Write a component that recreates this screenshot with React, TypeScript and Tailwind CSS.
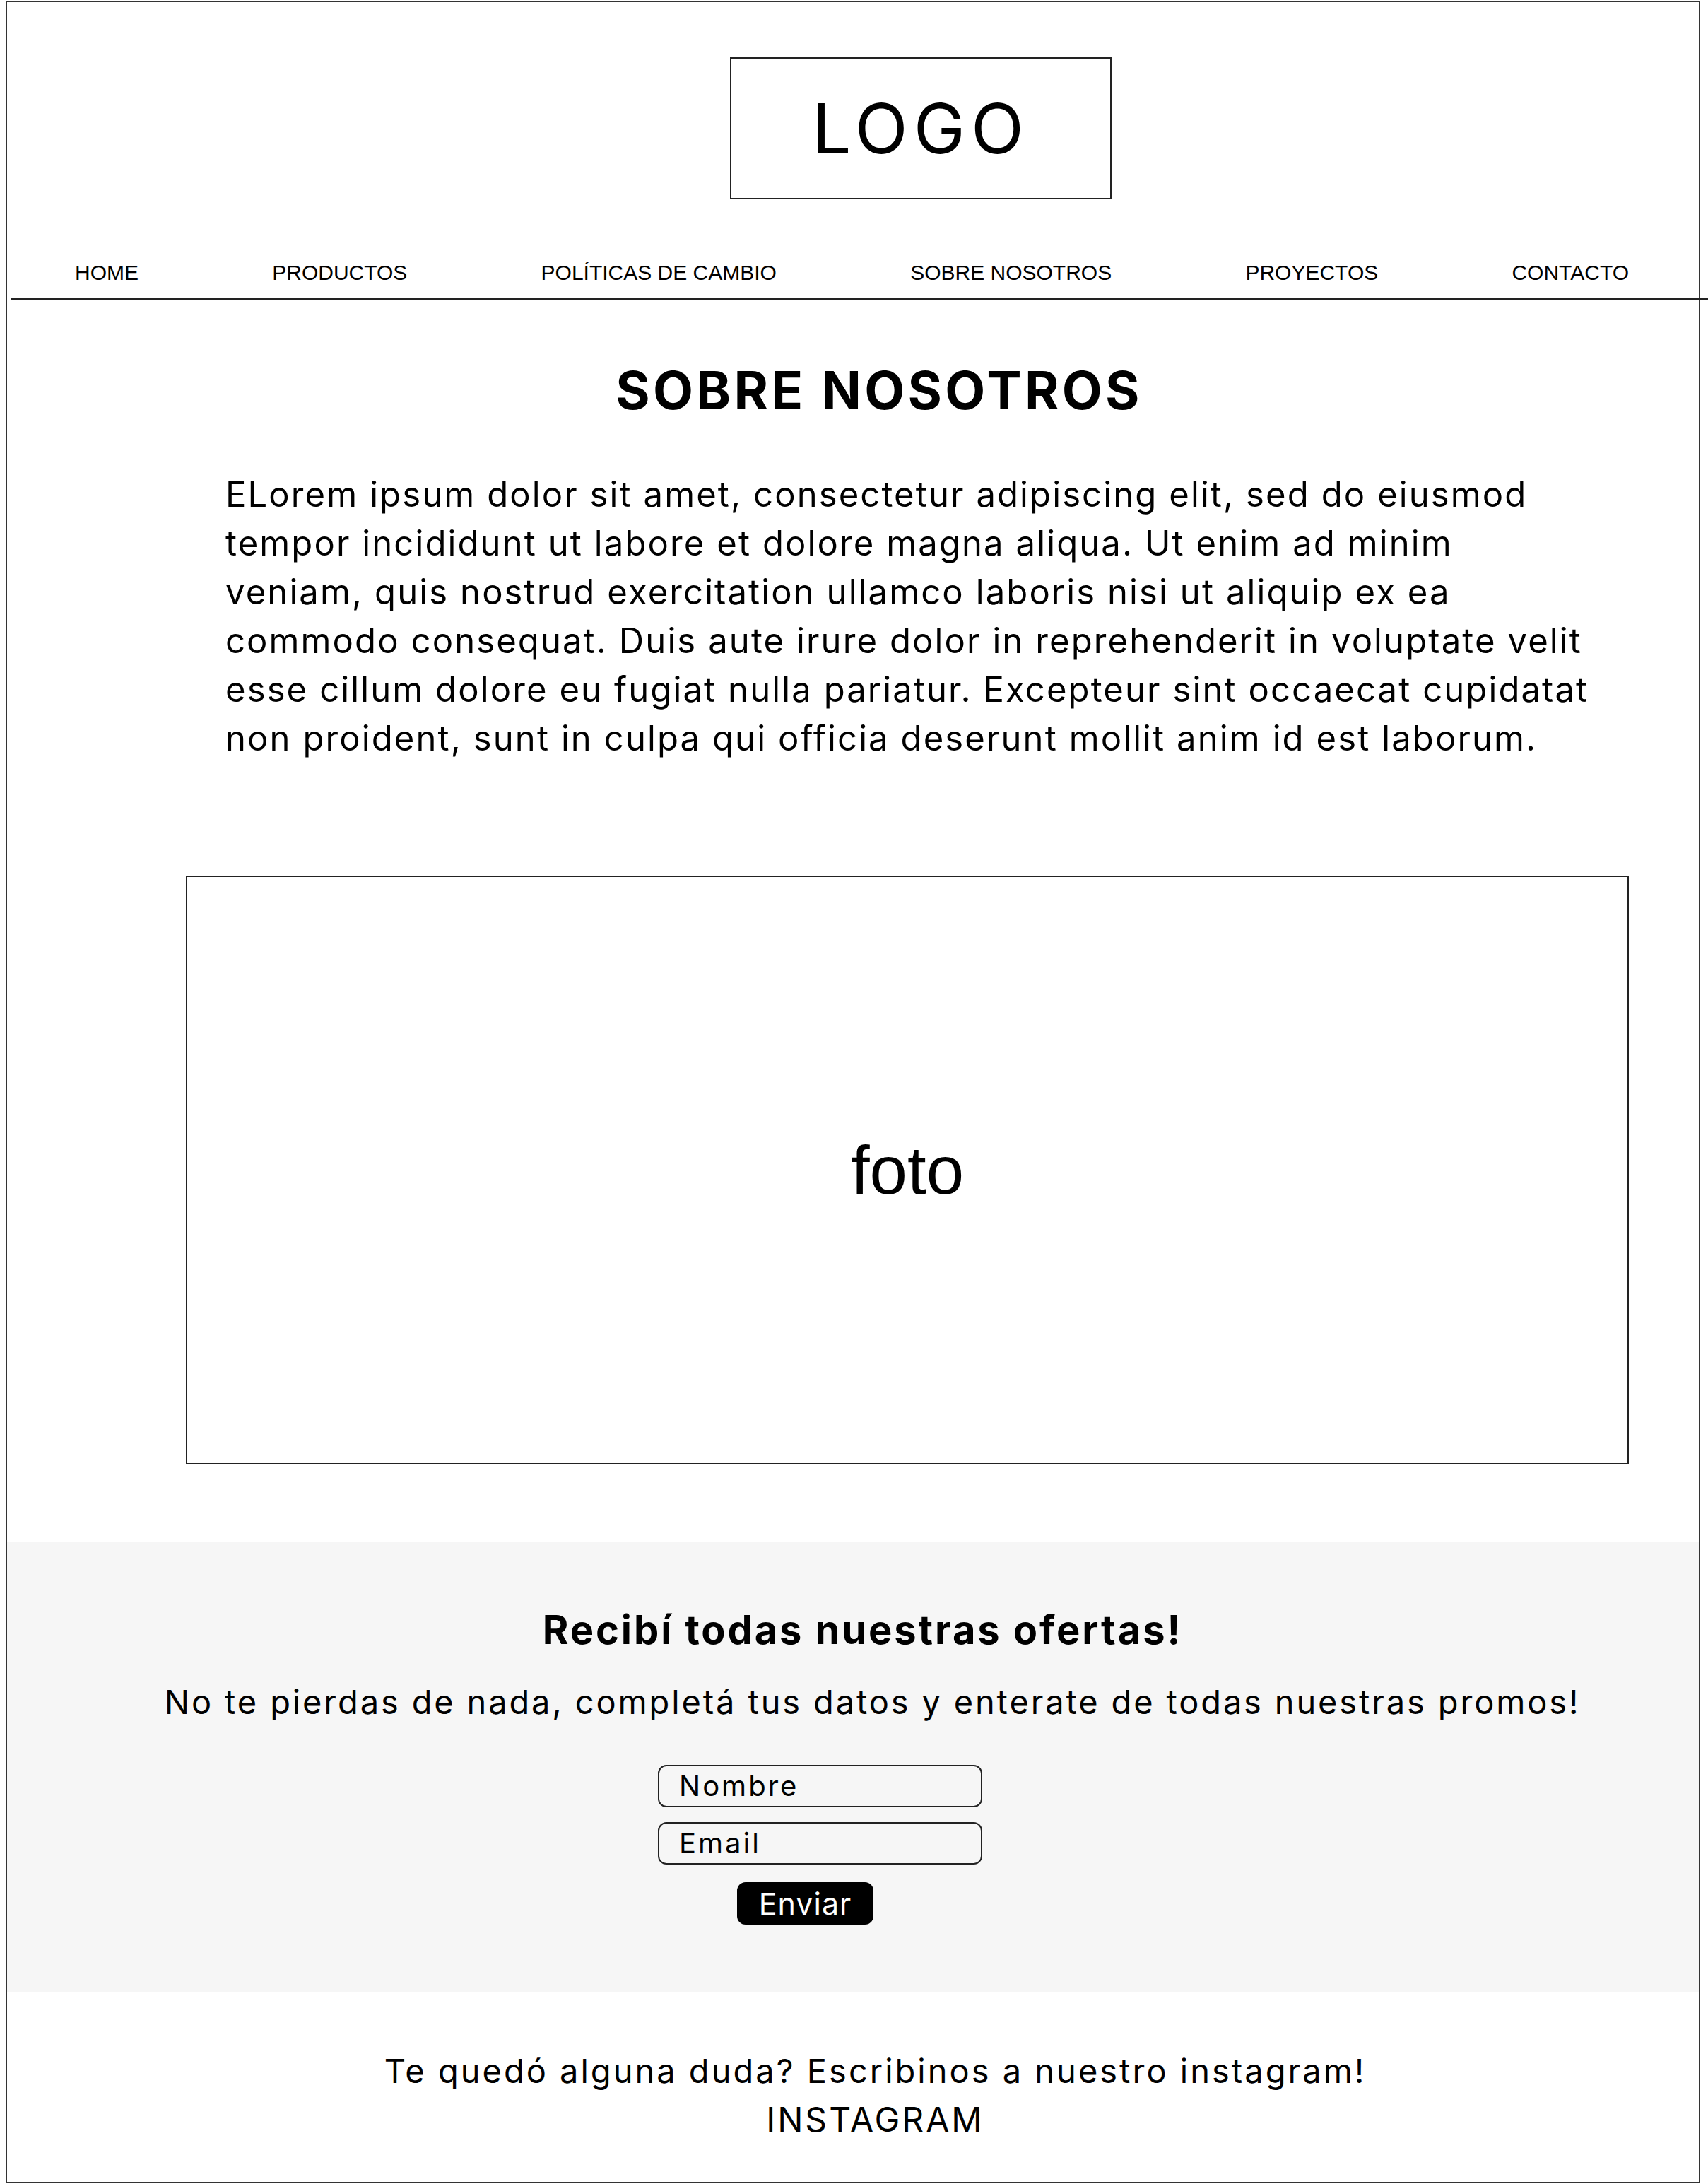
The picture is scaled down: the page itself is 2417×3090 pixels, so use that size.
import React from "react";

const navItems = [
  "HOME",
  "PRODUCTOS",
  "POLÍTICAS DE CAMBIO",
  "SOBRE NOSOTROS",
  "PROYECTOS",
  "CONTACTO",
];

export default function App() {
  return (
    <div className="w-[2417px] min-h-[3090px] bg-white pl-[8px] pt-[1px] font-['Inter',sans-serif] text-black">
      <div className="w-[2398px] h-[3088px] border-2 border-[#333] flex flex-col">
        {/* Logo */}
        <div className="ml-[1023px] mt-[78px] w-[540px] h-[201px] border-2 border-[#222] flex items-center justify-center">
          <span className="text-[98px] leading-none font-normal tracking-[8px]">LOGO</span>
        </div>

        {/* Nav */}
        <nav className="mt-[89px] ml-[5px] mr-[-13px] border-b-2 border-[#222] pb-[21px] pl-[91px] pr-[112px] flex justify-between font-['Liberation_Sans',Arial,sans-serif] text-[30px] leading-[30px]">
          {navItems.map((item) => (
            <span key={item}>{item}</span>
          ))}
        </nav>

        {/* Heading */}
        <h1 className="mt-[91px] pl-[74px] text-center text-[74px] leading-none font-bold tracking-[4.3px]">
          SOBRE NOSOTROS
        </h1>

        {/* Paragraph */}
        <p className="mt-[76px] ml-[309px] text-[49px] leading-[69px] whitespace-nowrap tracking-[2.1px]">
          ELorem ipsum dolor sit amet, consectetur adipiscing elit, sed do eiusmod
          <br />
          tempor incididunt ut labore et dolore magna aliqua. Ut enim ad minim
          <br />
          veniam, quis nostrud exercitation ullamco laboris nisi ut aliquip ex ea
          <br />
          commodo consequat. Duis aute irure dolor in reprehenderit in voluptate velit
          <br />
          esse cillum dolore eu fugiat nulla pariatur. Excepteur sint occaecat cupidatat
          <br />
          non proident, sunt in culpa qui officia deserunt mollit anim id est laborum.
        </p>

        {/* Photo */}
        <div className="mt-[160px] ml-[253px] w-[2042px] h-[833px] border-2 border-[#222] flex items-center justify-center">
          <span className="font-['Liberation_Sans',Arial,sans-serif] text-[96px] leading-none">foto</span>
        </div>

        {/* Newsletter */}
        <section className="mt-[109px] h-[637px] bg-[#f6f6f6] flex flex-col pt-[97px]">
          <h2 className="pl-[27px] text-center text-[56px] leading-none font-bold tracking-[2.9px]">
            Recibí todas nuestras ofertas!
          </h2>
          <p className="mt-[50px] pl-[55px] text-center text-[47px] leading-none whitespace-nowrap tracking-[2.85px]">
            No te pierdas de nada, completá tus datos y enterate de todas nuestras promos!
          </p>
          <div className="mt-[66px] ml-[921px] w-[459px] flex flex-col">
            <div className="h-[60px] border-2 border-[#222] rounded-[12px] flex items-center pl-[28px] text-[40px] leading-none tracking-[3px]">
              Nombre
            </div>
            <div className="mt-[21px] h-[60px] border-2 border-[#222] rounded-[12px] flex items-center pl-[28px] text-[40px] leading-none tracking-[3px]">
              Email
            </div>
            <button className="mt-[25px] ml-[112px] w-[193px] h-[60px] bg-black text-white rounded-[12px] flex items-center justify-center text-[43px] leading-none tracking-[1px]">
              Enviar
            </button>
          </div>
        </section>

        {/* Footer */}
        <footer className="flex flex-col items-center pl-[63px]">
          <p className="mt-[88px] text-[47px] leading-none whitespace-nowrap tracking-[3px]">
            Te quedó alguna duda? Escribinos a nuestro instagram!
          </p>
          <p className="mt-[22px] text-[48px] leading-none tracking-[3px]">INSTAGRAM</p>
        </footer>
      </div>
    </div>
  );
}
